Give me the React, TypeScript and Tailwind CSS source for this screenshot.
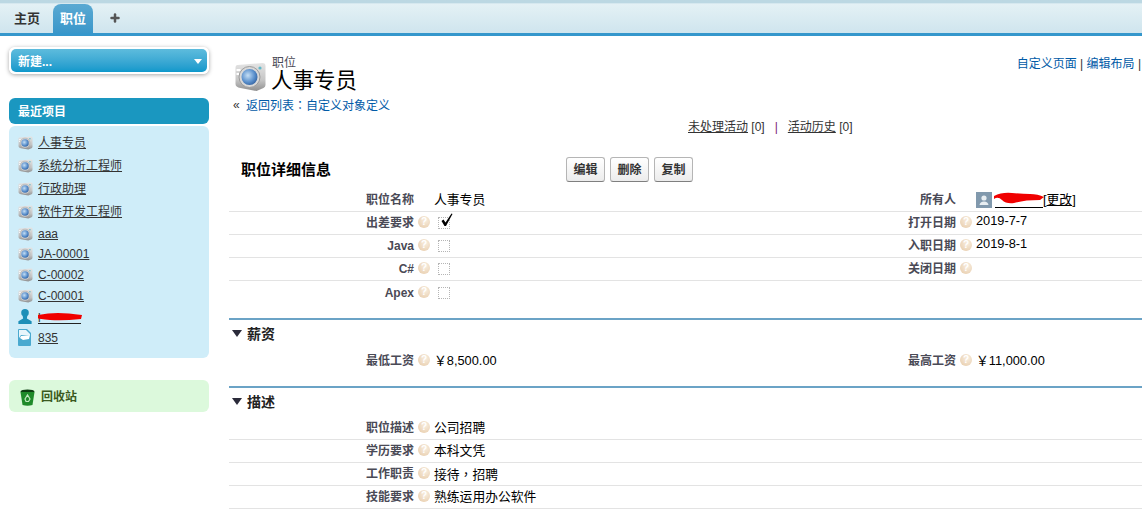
import type { ReactNode } from "react";
import { Plus } from "lucide-react";

const recent = [
  { label: "人事专员", kind: "camera", h: "h-[23px]" },
  { label: "系统分析工程师", kind: "camera", h: "h-[23px]" },
  { label: "行政助理", kind: "camera", h: "h-[23px]" },
  { label: "软件开发工程师", kind: "camera", h: "h-[23px]" },
  { label: "aaa", kind: "camera", h: "h-[21px]" },
  { label: "JA-00001", kind: "camera", h: "h-[20px]" },
  { label: "C-00002", kind: "camera", h: "h-[21px]" },
  { label: "C-00001", kind: "camera", h: "h-[21px]" },
  { label: "l", kind: "person", h: "h-[21px]" },
  { label: "835", kind: "file", h: "h-[21px]" },
];

function CameraIcon({ className }: { className: string }) {
  return (
    <svg viewBox="0 0 32 30" className={className}>
      <defs>
        <linearGradient id="camBody" x1="0" y1="0" x2="0" y2="1">
          <stop offset="0" stopColor="#e4e4e4" />
          <stop offset="0.6" stopColor="#c6c6c6" />
          <stop offset="1" stopColor="#8f8f8f" />
        </linearGradient>
        <radialGradient id="camLens" cx="0.4" cy="0.4" r="0.7">
          <stop offset="0" stopColor="#c4def5" />
          <stop offset="0.6" stopColor="#5b90cc" />
          <stop offset="1" stopColor="#2b5a9a" />
        </radialGradient>
      </defs>
      <path d="M1 6 Q1 3 3 3 L28 1 Q31 1 31 4 L31 23 Q31 25 29 26 L22 29 L6 26 Q1 25 1 22 Z" fill="url(#camBody)" />
      <rect x="2" y="7" width="4" height="2" fill="#fff" />
      <rect x="2" y="11" width="4" height="2" fill="#fff" />
      <circle cx="15" cy="15" r="10.5" fill="#d8d8d8" stroke="#9c9c9c" />
      <circle cx="15" cy="15" r="8" fill="url(#camLens)" />
      <circle cx="25.5" cy="6" r="1.6" fill="#5fb8c9" />
    </svg>
  );
}

function PersonIcon() {
  return (
    <svg viewBox="0 0 16 18" className="h-[17px] w-[16px] shrink-0">
      <circle cx="8" cy="5" r="4" fill="#1c8fb8" />
      <path d="M5.5 8 L10.5 8 L10 11 L15 14 L15 17 L1 17 L1 14 L6 11 Z" fill="#1c8fb8" />
    </svg>
  );
}

function FileIcon() {
  return (
    <svg viewBox="0 0 14 17" className="h-[17px] w-[14px] shrink-0">
      <path d="M1 0 L9 0 L13 4 L13 16 Q13 17 12 17 L1 17 Q0 17 0 16 L0 1 Q0 0 1 0 Z" fill="#4aa9cf" />
      <path d="M1 1 L8 1 L12 5 L12 6 L3 6 L1 9 Z" fill="#e8f5fb" />
      <path d="M3 7 L12 6 L11 10 L5 11 L2 9 Z" fill="#fff" />
    </svg>
  );
}

function BinIcon() {
  return (
    <svg viewBox="0 0 15 17" className="h-[17px] w-[15px] shrink-0">
      <ellipse cx="7.5" cy="2.5" rx="7" ry="2" fill="#0d3d12" />
      <path d="M0.5 3 L14.5 3 L12.5 16 Q7.5 17.5 2.5 16 Z" fill="#1f8a2a" />
      <path d="M5 10 L7.5 6 L10 10 L8.5 12.5 L6 12.5 Z" fill="none" stroke="#bfe8bf" strokeWidth="1.2" />
    </svg>
  );
}

function HelpDot() {
  return (
    <span className="flex h-3 w-3 items-center justify-center rounded-full bg-[radial-gradient(circle_at_60%_35%,#f8eee0,#e6c9a6)] text-[10px] leading-none font-bold text-white">
      ?
    </span>
  );
}

function Checkbox({ checked }: { checked?: boolean }) {
  return (
    <span className="relative ml-1 block h-3 w-3 border border-dotted border-[#b5b5b5]">
      {checked && (
        <svg viewBox="0 0 14 14" className="absolute -top-[5px] left-px h-[14px] w-[14px]">
          <path d="M1.5 8 L3.5 6.5 L5.5 9.5 L11.5 0.5 L12.5 1 L6 13 L4.5 13 Z" fill="#000" />
        </svg>
      )}
    </span>
  );
}

function Row({
  label,
  help = true,
  value,
  rightLabel,
  rightHelp = true,
  rightValue,
  line = true,
}: {
  label: string;
  help?: boolean;
  value: ReactNode;
  rightLabel?: string;
  rightHelp?: boolean;
  rightValue?: ReactNode;
  line?: boolean;
}) {
  return (
    <div
      className={`grid h-[23px] grid-cols-[185px_20px_322px_200px_20px_1fr] items-center text-xs ${
        line ? "border-b border-[#e3e3e3]" : ""
      }`}
    >
      <div className="text-right font-bold text-[#4a4a56]">{label}</div>
      <div className="pb-[2px] pl-[4px]">{help && <HelpDot />}</div>
      <div className="text-[12.8px] text-black">{value}</div>
      <div className="text-right font-bold text-[#4a4a56]">{rightLabel}</div>
      <div className="pb-[2px] pl-[4px]">{rightLabel && rightHelp && <HelpDot />}</div>
      <div className="text-[12.8px] text-black">{rightValue}</div>
    </div>
  );
}

function Section({ title }: { title: string }) {
  return (
    <div className="flex h-[29px] items-center gap-[5px] border-t-2 border-[#6ba3c6] pl-[3px] text-sm font-bold text-[#222]">
      <span className="h-0 w-0 border-x-[5px] border-t-[7px] border-x-transparent border-t-[#2b2b3a]" />
      {title}
    </div>
  );
}

function ActionButton({ label }: { label: string }) {
  return (
    <button className="h-[25px] w-[39px] rounded-[3px] border border-[#b5b5b5] border-b-[#7f7f7f] bg-gradient-to-b from-white to-[#ececec] text-xs font-bold text-[#333]">
      {label}
    </button>
  );
}

export default function App() {
  return (
    <div className="h-[513px] w-[1142px] overflow-hidden bg-white font-['Liberation_Sans','Noto_Sans_CJK_SC',sans-serif] text-xs">
      <header className="flex h-[36px] border-b-[3px] border-[#3597cc] bg-gradient-to-b from-[#bcd8e3] from-[8%] via-[#e4f1f5] via-[12%] to-[#cfe5ee] pl-[5px]">
        <a className="mt-1 flex w-[44px] items-center justify-center text-[13px] font-bold text-[#333]">主页</a>
        <a className="mt-1 ml-[4px] flex w-[40px] items-center justify-center rounded-t-lg bg-gradient-to-b from-[#5aa9d2] to-[#3a97ca] text-[13px] font-bold text-white">
          职位
        </a>
        <span className="mt-[3px] ml-[16px] flex items-center text-[#555]">
          <Plus size={12} strokeWidth={5} />
        </span>
      </header>

      <div className="flex">
        <aside className="w-[229px] shrink-0 pt-[11px] pl-[9px]">
          <div className="w-[200px] rounded-md border-2 border-white shadow-[0_1px_4px_rgba(0,0,0,0.35)]">
            <div className="flex h-[23px] items-center justify-between rounded-[5px] bg-gradient-to-b from-[#5dbcdd] to-[#0b98cb] pt-[2px] pr-[5px] pl-[7px] font-bold text-white">
              新建...
              <span className="h-0 w-0 border-x-[4px] border-t-[5px] border-x-transparent border-t-white" />
            </div>
          </div>
          <div className="mt-[24px] flex h-[26px] w-[200px] items-center rounded-md bg-[#1a97c0] pt-[2px] pl-[9px] font-bold text-white">
            最近项目
          </div>
          <ul className="mt-[2px] h-[232px] w-[200px] rounded-md bg-[#cfedf9] pt-[5px] pl-[8px]">
            {recent.map((item) => (
              <li key={item.label} className={`flex items-center gap-[5px] ${item.h}`}>
                <span className="flex w-[16px] justify-center">
                  {item.kind === "camera" && <CameraIcon className="h-[14px] w-[15px] shrink-0" />}
                  {item.kind === "person" && <PersonIcon />}
                  {item.kind === "file" && <FileIcon />}
                </span>
                {item.kind === "person" ? (
                  <span className="relative h-[14px] w-[43px] border-b border-[#222] text-[#333]">
                    l
                    <svg viewBox="0 0 44 9" className="absolute top-[2px] left-0 h-[9px] w-[44px]">
                      <path d="M0 3 Q10 1 20 1 T44 3 L43 7 Q25 9 12 8 T0 6 Z" fill="#f00000" />
                    </svg>
                  </span>
                ) : (
                  <a className="text-[#333] underline">{item.label}</a>
                )}
              </li>
            ))}
          </ul>
          <div className="mt-[22px] flex h-[32px] w-[200px] items-center gap-[6px] rounded-md bg-[#dcf9dc] pt-[2px] pl-[11px] font-bold text-[#3a5a20]">
            <BinIcon />
            回收站
          </div>
        </aside>

        <main className="min-w-0 flex-1">
          <div className="flex h-[58px] justify-between pt-[21px]">
            <div className="flex pl-[5px]">
              <CameraIcon className="mt-[5px] h-[30px] w-[33px] shrink-0" />
              <div className="pl-[5px]">
                <div className="h-[12px] text-xs leading-[12px] text-[#4a4a56]">职位</div>
                <h1 className="-ml-px text-[21.5px] leading-[25px] text-black">人事专员</h1>
              </div>
            </div>
            <div className="pr-px text-xs leading-[14px] text-[#333]">
              <a className="text-[#015ba7]">自定义页面</a> | <a className="text-[#015ba7]">编辑布局</a> |
            </div>
          </div>
          <div className="mt-[3px] flex h-[16px] items-center gap-[3px] pl-[4px] text-xs text-[#333]">
            «&nbsp;
            <a className="text-[#015ba7]">
              返回列表<span className="font-['Noto_Sans_CJK_TC',sans-serif]">：</span>自定义对象定义
            </a>
          </div>
          <div className="mt-[6px] flex h-[16px] items-center pl-[459px] text-xs text-[#333]">
            <a className="underline">未处理活动</a>&nbsp;[0]
            <span className="mx-[10px] text-[#7b1a7b]">|</span>
            <a className="underline">活动历史</a>&nbsp;[0]
          </div>

          <div className="mt-[22px] flex h-[25px] items-center">
            <h2 className="w-[337px] pl-[12px] text-[15px] font-bold text-black">职位详细信息</h2>
            <div className="flex gap-[5px]">
              <ActionButton label="编辑" />
              <ActionButton label="删除" />
              <ActionButton label="复制" />
            </div>
          </div>

          <div className="mt-[7px]">
            <Row
              label="职位名称"
              help={false}
              value="人事专员"
              rightLabel="所有人"
              rightHelp={false}
              rightValue={
                <span className="flex items-center">
                  <span className="flex h-4 w-4 items-end justify-center bg-[#8199ad]">
                    <svg viewBox="0 0 16 16" className="h-4 w-4">
                      <circle cx="8" cy="6" r="2.6" fill="#e8eef2" />
                      <path d="M3.5 13 Q4 9.5 8 9.5 T12.5 13 Z" fill="#e8eef2" />
                    </svg>
                  </span>
                  <span className="relative ml-[3px] h-4 w-[48px] border-b border-black">
                    <svg viewBox="0 0 50 12" className="absolute top-0 -left-px h-[12px] w-[50px]">
                      <path d="M0 4 Q8 0 18 1 T36 2 T50 5 L46 8 Q30 8 20 11 Q12 12 8 8 T0 7 Z" fill="#f00000" />
                    </svg>
                  </span>
                  <span>
                    [<a className="underline">更改</a>]
                  </span>
                </span>
              }
            />
            <Row
              label="出差要求"
              value={<Checkbox checked />}
              rightLabel="打开日期"
              rightValue={<span className="relative -top-[2px]">2019-7-7</span>}
            />
            <Row
              label="Java"
              value={<Checkbox />}
              rightLabel="入职日期"
              rightValue={<span className="relative -top-[2px]">2019-8-1</span>}
            />
            <Row label="C#" value={<Checkbox />} rightLabel="关闭日期" />
            <Row label="Apex" value={<Checkbox />} line={false} />
          </div>

          <div className="mt-[14px]">
            <Section title="薪资" />
            <div className="mt-[2px] h-[37px]">
              <Row label="最低工资" value="￥8,500.00" rightLabel="最高工资" rightValue="￥11,000.00" line={false} />
            </div>
          </div>

          <div>
            <Section title="描述" />
            <div className="mt-[2px]">
              <Row label="职位描述" value="公司招聘" />
              <Row label="学历要求" value="本科文凭" />
              <Row
                label="工作职责"
                value={
                  <>
                    接待<span className="font-['Noto_Sans_CJK_TC',sans-serif]">，</span>招聘
                  </>
                }
              />
              <Row label="技能要求" value="熟练运用办公软件" />
            </div>
          </div>
        </main>
      </div>
    </div>
  );
}
